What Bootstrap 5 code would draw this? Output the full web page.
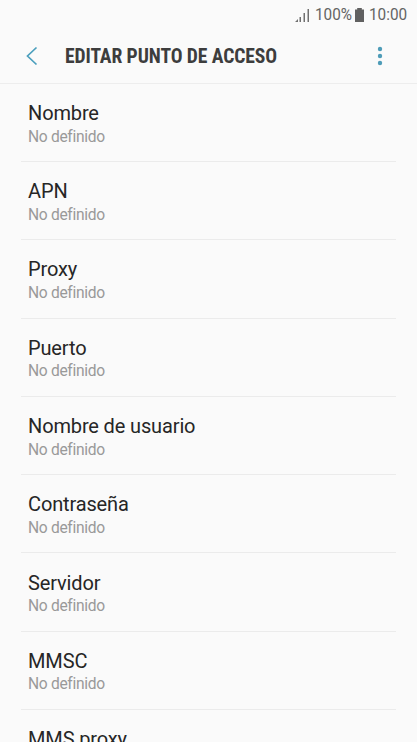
<!DOCTYPE html>
<html lang="es">
<head>
<meta charset="utf-8">
<meta name="viewport" content="width=device-width, initial-scale=1">
<title>Editar punto de acceso</title>
<link href="https://cdn.jsdelivr.net/npm/bootstrap@5.3.0/dist/css/bootstrap.min.css" rel="stylesheet">
<style>
html,body{height:100%}
body{background:#fafafa;font-family:Roboto,"Liberation Sans",sans-serif;color:#262626}
.screen{height:742px}
.status-bar{height:29px;padding-right:9px;color:#646464;font-size:17.2px;line-height:29px}
.status-bar svg{display:block}
.status-level{margin-left:5px;width:36px}
.status-battery{margin-left:4px}
.status-time{margin-left:5px;width:39px}
.squeeze{display:inline-block;transform:scaleX(.89);transform-origin:0 50%;white-space:nowrap}
.app-bar{height:55px;border-bottom:1px solid #ededed;padding-left:25px;padding-right:34px}
.app-title{font-family:"Roboto Condensed",Roboto,sans-serif;font-stretch:condensed;font-size:19.6px;font-weight:700;letter-spacing:-.09px;color:#3d3d3d;line-height:24px;margin-left:26px;padding-top:2px}
.setting{height:78.27px;margin:0 21px;padding:17.100px 7px 0;border-bottom:1px solid #ebebeb}
.settings-list{margin-top:-.2px}
.setting-name{font-size:20px;line-height:24px;letter-spacing:-.14px}
.setting-value{font-size:15.6px;line-height:20px;letter-spacing:-.32px;color:#999;margin-top:1.6px}
</style>
</head>
<body>
<div class="screen d-flex flex-column overflow-hidden">
<div class="status-bar d-flex align-items-center justify-content-end flex-shrink-0">
<svg width="15" height="14" viewBox="0 0 15 14" fill="#707070"><path d="M0 14l3-3v3zM4.500 9h1.500v5H4.500zM8.500 5H10v9H8.500zM12.500 1H14v13h-1.500z"/></svg>
<span class="status-level"><span class="squeeze">100%</span></span>
<svg class="status-battery" width="9" height="14" viewBox="0 0 9 14" fill="#606060"><path d="M2.2 0h4.6v1.5H9V14H0V1.5h2.2z"/></svg>
<span class="status-time"><span class="squeeze">10:00</span></span>
</div>
<header class="app-bar d-flex align-items-center flex-shrink-0">
<svg width="14" height="20" viewBox="0 0 14 20" fill="none" stroke="#4b9fbd" stroke-width="1.7"><path d="M11.5 1.5L2.500 10l9 8.500"/></svg>
<h1 class="app-title mb-0">EDITAR PUNTO DE ACCESO</h1>
<svg class="ms-auto" width="6" height="20" viewBox="0 0 6 20" fill="#4e9cb8"><circle cx="3" cy="3" r="2.2"/><circle cx="3" cy="10" r="2.2"/><circle cx="3" cy="17" r="2.2"/></svg>
</header>
<main class="settings-list">
<div class="setting"><div class="setting-name">Nombre</div><div class="setting-value">No definido</div></div>
<div class="setting"><div class="setting-name">APN</div><div class="setting-value">No definido</div></div>
<div class="setting"><div class="setting-name">Proxy</div><div class="setting-value">No definido</div></div>
<div class="setting"><div class="setting-name">Puerto</div><div class="setting-value">No definido</div></div>
<div class="setting"><div class="setting-name">Nombre de usuario</div><div class="setting-value">No definido</div></div>
<div class="setting"><div class="setting-name">Contraseña</div><div class="setting-value">No definido</div></div>
<div class="setting"><div class="setting-name">Servidor</div><div class="setting-value">No definido</div></div>
<div class="setting"><div class="setting-name">MMSC</div><div class="setting-value">No definido</div></div>
<div class="setting"><div class="setting-name">MMS proxy</div><div class="setting-value">No definido</div></div>
</main>
</div>
</body>
</html>
